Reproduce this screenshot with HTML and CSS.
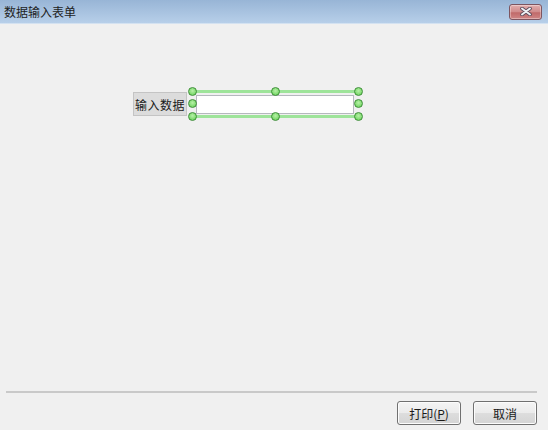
FILE: index.html
```html
<!DOCTYPE html>
<html lang="zh-CN">
<head>
    <meta charset="UTF-8">
    <title>数据输入表单</title>
    <link rel="stylesheet" href="styles.css">
</head>
<body>

<div class="window">
    <div class="titlebar">
        <span class="title">数据输入表单</span>
        <button class="close-btn" aria-label="关闭">
            <svg width="12" height="9" viewBox="0 0 12 9">
                <path d="M2 1.5 L10 7.5 M10 1.5 L2 7.5" stroke="#5a4a5a" stroke-width="3.6" stroke-linecap="round"/>
                <path d="M2 1.5 L10 7.5 M10 1.5 L2 7.5" stroke="#eef0f4" stroke-width="2" stroke-linecap="round"/>
            </svg>
        </button>
    </div>

    <div class="canvas">
        <div class="field-row">
            <span class="field-label">输入数据</span>
            <!-- selected control in the designer -->
            <div class="selected">
                <input type="text" class="field-input">
                <span class="handle h-tl"></span>
                <span class="handle h-tc"></span>
                <span class="handle h-tr"></span>
                <span class="handle h-ml"></span>
                <span class="handle h-mr"></span>
                <span class="handle h-bl"></span>
                <span class="handle h-bc"></span>
                <span class="handle h-br"></span>
            </div>
        </div>
    </div>

    <div class="footer">
        <div class="separator"></div>
        <div class="actions">
            <button class="dlg-btn">打印(<u>P</u>)</button>
            <button class="dlg-btn">取消</button>
        </div>
    </div>
</div>

</body>
</html>
```

FILE: styles.css
```css
body {
    margin: 0;
    font-family: "Noto Sans CJK SC", "Liberation Sans", sans-serif;
    font-size: 12px;
    color: #1a1a1a;
    background-color: #f0f0f0;
}

.window {
    width: 548px;
    height: 430px;
    display: flex;
    flex-direction: column;
    background-color: #f0f0f0;
}

.titlebar {
    height: 24px;
    box-sizing: border-box;
    display: flex;
    align-items: center;
    justify-content: space-between;
    padding: 0 6px 0 4px;
    background: linear-gradient(to bottom, #98b5d6, #b7cfe9);
    border-bottom: 1px solid #d4e2f1;
}

.title {
    font-size: 12px;
    color: #1e1e1e;
    line-height: 1;
}

.close-btn {
    width: 33px;
    height: 16px;
    margin-top: 0;
    padding: 0;
    display: flex;
    align-items: center;
    justify-content: center;
    border: 1px solid #7d5560;
    border-radius: 3px;
    background: linear-gradient(to bottom, #e2aeae 0%, #d08a8a 50%, #c06a6a 55%, #cf8585 100%);
    box-shadow: inset 0 0 0 1px rgba(255, 255, 255, 0.35);
}

.canvas {
    flex: 1;
    padding: 66px 0 0 133px;
}

.field-row {
    display: flex;
    align-items: center;
}

.field-label {
    width: 54px;
    height: 24px;
    box-sizing: border-box;
    display: flex;
    align-items: center;
    justify-content: center;
    background-color: #dcdcdc;
    border: 1px solid #c4c4c4;
    font-size: 12px;
    color: #1a1a1a;
    letter-spacing: 0.5px;
}

.selected {
    position: relative;
    width: 165px;
    height: 28px;
    margin-left: 6px;
    box-sizing: border-box;
    border-top: 3px solid #9ee49a;
    border-bottom: 3px solid #9ee49a;
    display: flex;
    align-items: center;
}

.field-input {
    width: 158px;
    height: 19px;
    margin-left: 3px;
    box-sizing: border-box;
    border: 1px solid #b5b8be;
    background-color: #fff;
    padding: 0;
}

.handle {
    position: absolute;
    width: 9px;
    height: 9px;
    box-sizing: border-box;
    border: 1px solid #3f8f3a;
    border-radius: 50%;
    background: radial-gradient(circle at 50% 40%, #b8f0a8, #5fcf50);
}

.h-tl, .h-tc, .h-tr { top: -6px; }
.h-ml, .h-mr { top: 6px; }
.h-bl, .h-bc, .h-br { bottom: -6px; }
.h-tl, .h-ml, .h-bl { left: -5px; }
.h-tc, .h-bc { left: 78px; }
.h-tr, .h-mr, .h-br { right: -5px; }

.footer {
    padding: 0 11px 5px 6px;
}

.separator {
    height: 2px;
    background-color: #c9c9c9;
    margin-bottom: 8px;
}

.actions {
    display: flex;
    justify-content: flex-end;
    gap: 12px;
}

.dlg-btn {
    width: 64px;
    height: 24px;
    padding: 0;
    font-family: "Noto Sans CJK SC", "Liberation Sans", sans-serif;
    font-size: 12px;
    color: #1a1a1a;
    border: 1px solid #707070;
    border-radius: 3px;
    background: linear-gradient(to bottom, #f4f4f4 0%, #ebebeb 50%, #dddddd 51%, #d4d4d4 100%);
    box-shadow: inset 0 0 0 1px #fcfcfc;
}
```
